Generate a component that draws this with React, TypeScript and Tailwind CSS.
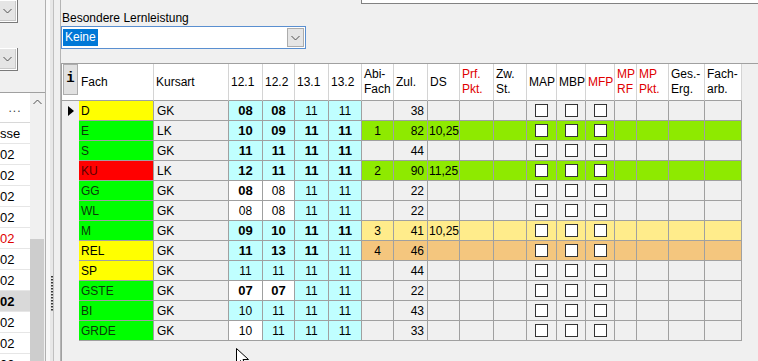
import React from 'react';

type G = [string, boolean, boolean];
type Row = {
  f: string;
  fc: string;
  k: string;
  g: G[];
  abi: string;
  zul: string;
  ds: string;
  rc: string;
};

const YEL = 'bg-[#ffff00] text-black';
const GRN = 'bg-[#00ff00] text-[#0a3a0a]';
const RED = 'bg-[#ff0000] text-[#5a0000]';
const NONE = 'bg-[#f0f0f0]';
const LIME = 'bg-[#8eea00]';
const LY = 'bg-[#ffec8b]';
const OR = 'bg-[#f4c67e]';

const rows: Row[] = [
  { f: 'D', fc: YEL, k: 'GK', g: [['08', true, true], ['08', true, true], ['11', false, true], ['11', false, true]], abi: '', zul: '38', ds: '', rc: NONE },
  { f: 'E', fc: GRN, k: 'LK', g: [['10', true, true], ['09', true, true], ['11', true, true], ['11', true, true]], abi: '1', zul: '82', ds: '10,25', rc: LIME },
  { f: 'S', fc: GRN, k: 'GK', g: [['11', true, true], ['11', true, true], ['11', true, true], ['11', true, true]], abi: '', zul: '44', ds: '', rc: NONE },
  { f: 'KU', fc: RED, k: 'LK', g: [['12', true, true], ['11', true, true], ['11', true, true], ['11', true, true]], abi: '2', zul: '90', ds: '11,25', rc: LIME },
  { f: 'GG', fc: GRN, k: 'GK', g: [['08', true, false], ['08', false, false], ['11', false, true], ['11', false, true]], abi: '', zul: '22', ds: '', rc: NONE },
  { f: 'WL', fc: GRN, k: 'GK', g: [['08', false, false], ['08', false, false], ['11', false, true], ['11', false, true]], abi: '', zul: '22', ds: '', rc: NONE },
  { f: 'M', fc: GRN, k: 'GK', g: [['09', true, true], ['10', true, true], ['11', true, true], ['11', true, true]], abi: '3', zul: '41', ds: '10,25', rc: LY },
  { f: 'REL', fc: YEL, k: 'GK', g: [['11', true, true], ['13', true, true], ['11', true, true], ['11', false, true]], abi: '4', zul: '46', ds: '', rc: OR },
  { f: 'SP', fc: YEL, k: 'GK', g: [['11', false, true], ['11', false, true], ['11', false, true], ['11', false, true]], abi: '', zul: '44', ds: '', rc: NONE },
  { f: 'GSTE', fc: GRN, k: 'GK', g: [['07', true, false], ['07', true, false], ['11', false, true], ['11', false, true]], abi: '', zul: '22', ds: '', rc: NONE },
  { f: 'BI', fc: GRN, k: 'GK', g: [['10', false, true], ['11', false, true], ['11', false, true], ['11', false, true]], abi: '', zul: '43', ds: '', rc: NONE },
  { f: 'GRDE', fc: GRN, k: 'GK', g: [['10', false, false], ['11', false, true], ['11', false, true], ['11', false, true]], abi: '', zul: '33', ds: '', rc: NONE },
];

const gradeW = ['w-[34px]', 'w-[32px]', 'w-[34px]', 'w-[33px]'];

const headers: { w: string; l: string[]; red?: boolean }[] = [
  { w: 'w-[75px]', l: ['Fach'] },
  { w: 'w-[75px]', l: ['Kursart'] },
  { w: 'w-[34px]', l: ['12.1'] },
  { w: 'w-[32px]', l: ['12.2'] },
  { w: 'w-[34px]', l: ['13.1'] },
  { w: 'w-[33px]', l: ['13.2'] },
  { w: 'w-[32px]', l: ['Abi-', 'Fach'] },
  { w: 'w-[34px]', l: ['Zul.'] },
  { w: 'w-[32px]', l: ['DS'] },
  { w: 'w-[34px]', l: ['Prf.', 'Pkt.'], red: true },
  { w: 'w-[33px]', l: ['Zw.', 'St.'] },
  { w: 'w-[30px]', l: ['MAP'] },
  { w: 'w-[29px]', l: ['MBP'] },
  { w: 'w-[29px]', l: ['MFP'], red: true },
  { w: 'w-[22px]', l: ['MP', 'RF'], red: true },
  { w: 'w-[32px]', l: ['MP', 'Pkt.'], red: true },
  { w: 'w-[36px]', l: ['Ges.-', 'Erg.'] },
  { w: 'w-[37px]', l: ['Fach-', 'arb.'] },
];

const cell = 'shrink-0 h-full border-r border-b border-[#a0a0a0] flex items-center';

function Chevron({ up = false }: { up?: boolean }) {
  return (
    <svg width="9" height="6" viewBox="0 0 9 6">
      <polyline
        points={up ? '0.5,5 4.5,1 8.5,5' : '0.5,1 4.5,5 8.5,1'}
        fill="none"
        stroke="#505050"
        strokeWidth="1"
      />
    </svg>
  );
}

function CheckBox() {
  return <div className="w-[13px] h-[13px] bg-white border border-[#333333]" />;
}

function SmallCombo() {
  return (
    <div className="w-[18px] h-[23px] border-r border-b border-[#7a7a7a] bg-white flex items-start">
      <div className="w-[16px] h-[20px] mt-[1px] bg-[#e5e5e5] border-r border-b border-[#c8c8c8] flex items-center justify-center">
        <Chevron />
      </div>
    </div>
  );
}

const leftRows: { t: string; red?: boolean; bold?: boolean }[] = [
  { t: 'sse' },
  { t: '02' },
  { t: '02' },
  { t: '02' },
  { t: '02' },
  { t: '02', red: true },
  { t: '02' },
  { t: '02' },
  { t: '02', bold: true },
  { t: '02' },
  { t: '02' },
  { t: '02' },
];

export default function App() {
  return (
    <div className="relative w-[758px] h-[361px] overflow-hidden flex bg-[#f0f0f0] text-black font-['Liberation_Sans',Arial,sans-serif]">
      {/* Left panel */}
      <div className="w-[45px] shrink-0 flex flex-col">
        <SmallCombo />
        <div className="mt-[25px]">
          <SmallCombo />
        </div>
        <div className="mt-[21px] flex-1 flex border-t border-[#a0a0a0] min-h-0">
          <div className="w-[30px] bg-white flex flex-col overflow-hidden">
            <div className="h-[30px] shrink-0 border-b border-[#d8d8d8] flex items-center justify-center text-[12px] text-[#404040] tracking-[1px]">
              ...
            </div>
            {leftRows.map((r, i) => (
              <div
                key={i}
                className={`h-[21px] shrink-0 border-b border-[#e6e6e6] flex items-center text-[13px] leading-none whitespace-nowrap ${
                  r.bold ? 'bg-[#d9d9d9] font-bold' : ''
                } ${r.red ? 'text-[#e00000]' : ''}`}
              >
                <span>{r.t}</span>
              </div>
            ))}
          </div>
          <div className="w-[15px] flex flex-col bg-[#f0f0f0]">
            <div className="h-[17px] flex items-center justify-center">
              <Chevron up />
            </div>
            <div className="h-[129px]" />
            <div className="flex-1 bg-[#cdcdcd] mr-[1px]" />
          </div>
        </div>
      </div>

      {/* Splitter */}
      <div className="w-[16px] shrink-0 flex">
        <div className="w-[1px] bg-[#b0b0b0]" />
        <div className="w-[4px] bg-[#f7f7f7]" />
        <div className="w-[3px] bg-[#e8e8e8] flex items-start justify-center pt-[276px]">
          <svg width="2" height="36" viewBox="0 0 2 36">
            {Array.from({ length: 12 }).map((_, i) => (
              <rect key={i} x="0" y={i * 3} width="2" height="1.5" fill="#3a3a3a" />
            ))}
          </svg>
        </div>
        <div className="w-[1px] bg-[#c0c0c0]" />
        <div className="w-[6px] bg-[#f0f0f0]" />
        <div className="w-[1px] bg-[#b4b4b4]" />
      </div>

      {/* Main */}
      <div className="flex-1 min-w-0 flex flex-col">
        <div className="h-[4px] shrink-0 flex">
          <div className="w-[300px] shrink-0" />
          <div className="flex-1 bg-white border-l border-b border-[#828282]" />
        </div>
        <div className="mt-[7px] ml-[1px] text-[12px] leading-[14px]">Besondere Lernleistung</div>
        <div className="mt-[1px] w-[245px] h-[23px] shrink-0 border border-[#5a8fd0] bg-white flex items-center justify-between pl-[1px] pr-[1px]">
          <div className="h-[17px] px-[2px] bg-[#0078d7] text-white text-[12px] leading-[17px]">Keine</div>
          <div className="w-[17px] h-[19px] bg-[#e5e5e5] border border-[#acacac] flex items-center justify-center">
            <Chevron />
          </div>
        </div>

        {/* Grid */}
        <div className="mt-[14px] flex-1 flex flex-col border-t border-l border-[#a0a0a0] text-[12px]">
          <div className="h-[37px] shrink-0 flex">
            <div className="w-[17px] shrink-0 h-full bg-white border-b border-[#a0a0a0] pl-[1px] pt-0">
              <div className="w-[15px] h-[31px] bg-[#e1e1e1] border border-[#adadad] flex justify-center pt-[5px] font-['Liberation_Mono',monospace] font-bold text-[14px] leading-[16px]">
                i
              </div>
            </div>
            {headers.map((h, i) => (
              <div
                key={i}
                className={`${h.w} shrink-0 h-full bg-white border-r border-b border-r-[#d4d4d4] border-b-[#a0a0a0] pl-[2px] flex flex-col justify-center leading-[15px] whitespace-nowrap overflow-hidden ${
                  h.red ? 'text-[#e00000]' : ''
                }`}
              >
                {h.l.map((t, j) => (
                  <div key={j}>{t}</div>
                ))}
              </div>
            ))}
            <div className="flex-1 bg-[#f0f0f0]" />
          </div>

          {rows.map((r, i) => (
            <div key={i} className="h-[20px] shrink-0 flex">
              <div className="w-[17px] shrink-0 h-full bg-[#f0f0f0] flex items-center justify-center">
                {i === 0 && (
                  <svg width="6" height="10" viewBox="0 0 6 10">
                    <polygon points="0,0 6,5 0,10" fill="#000" />
                  </svg>
                )}
              </div>
              <div className={`${cell} w-[75px] pl-[2px] ${r.fc}`}>{r.f}</div>
              <div className={`${cell} w-[75px] pl-[3px] bg-[#f0f0f0]`}>{r.k}</div>
              {r.g.map((g, j) => (
                <div
                  key={j}
                  className={`${cell} ${gradeW[j]} justify-center ${g[2] ? 'bg-[#c0ffff]' : 'bg-white'} ${
                    g[1] ? 'font-bold text-[13px]' : ''
                  }`}
                >
                  {g[0]}
                </div>
              ))}
              <div className={`${cell} w-[32px] justify-center ${r.rc}`}>{r.abi}</div>
              <div className={`${cell} w-[34px] justify-end pr-[3px] ${r.rc}`}>{r.zul}</div>
              <div className={`${cell} w-[32px] pl-[1px] ${r.rc}`}>{r.ds}</div>
              <div className={`${cell} w-[34px] ${r.rc}`} />
              <div className={`${cell} w-[33px] ${r.rc}`} />
              <div className={`${cell} w-[30px] justify-center ${r.rc}`}>
                <CheckBox />
              </div>
              <div className={`${cell} w-[29px] justify-center ${r.rc}`}>
                <CheckBox />
              </div>
              <div className={`${cell} w-[29px] justify-center ${r.rc}`}>
                <CheckBox />
              </div>
              <div className={`${cell} w-[22px] ${r.rc}`} />
              <div className={`${cell} w-[32px] ${r.rc}`} />
              <div className={`${cell} w-[36px] ${r.rc}`} />
              <div className={`${cell} w-[37px] ${r.rc}`} />
              <div className="flex-1 bg-[#f0f0f0]" />
            </div>
          ))}
          <div className="flex-1 bg-[#f0f0f0]" />
        </div>
      </div>

      {/* Mouse cursor */}
      <svg className="absolute left-[236px] top-[348px]" width="14" height="20" viewBox="0 0 14 20">
        <path d="M0.5 0.5 L0.5 16.5 L4.5 12.5 L7 18.5 L9.5 17.5 L7 11.5 L12.5 11.5 Z" fill="#ffffff" stroke="#000" strokeWidth="1" />
      </svg>
    </div>
  );
}
